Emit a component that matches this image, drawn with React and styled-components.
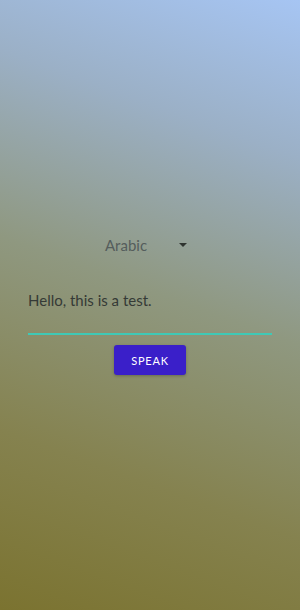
import React, {useState} from 'react';
import styled, {createGlobalStyle} from 'styled-components';

const Global = createGlobalStyle`
  html, body { margin:0; padding:0; }
  body { font-family: Lato, "Open Sans", sans-serif; }
`;

export default function App(){
  const [text, setText] = useState('Hello, this is a test.');
  return(
    <Page>
      <Global/>
      <Form>
        <Select>
          <SelectLabel>Arabic</SelectLabel>
          <Caret/>
        </Select>
        <Field>
          <Input value={text} onChange={e => setText(e.target.value)}/>
        </Field>
        <Button>SPEAK</Button>
      </Form>
    </Page>
  );
}

const Page = styled.div`
  width:300px;
  height:610px;
  background: linear-gradient(20deg, #7b7330 0%, #85824f 25%, #8f9880 52%, #9bb0c6 78%, #a6c5f3 100%);
  display:flex;
  flex-direction:column;
  align-items:center;
`

const Form = styled.div`
  width:244px;
  display:flex;
  flex-direction:column;
  align-items:center;
  margin-top:232px;
`

const Select = styled.div`
  width:82px;
  height:26px;
  display:flex;
  align-items:center;
  justify-content:space-between;
  margin-left:-8px;
`

const SelectLabel = styled.span`
  font-size:15px;
  color:#555d5c;
`

const Caret = styled.span`
  width:0;
  height:0;
  border-left:4px solid transparent;
  border-right:4px solid transparent;
  border-top:4px solid #2f3430;
`

const Field = styled.div`
  width:100%;
  margin-top:31px;
  border-bottom:2px solid #3fc9b6;
`

const Input = styled.input`
  width:100%;
  box-sizing:border-box;
  border:none;
  outline:none;
  background:transparent;
  font-family: Lato, "Open Sans", sans-serif;
  font-size:15px;
  color:#353a36;
  padding:0 0 22px 0;
  height:44px;
`

const Button = styled.button`
  margin-top:10px;
  width:72px;
  height:30px;
  border:none;
  border-radius:3px;
  background:#3a1fc9;
  color:#fff;
  font-family: Lato, "Open Sans", sans-serif;
  font-size:11px;
  letter-spacing:0.8px;
  box-shadow:0 1px 3px rgba(0,0,0,0.25);
`
